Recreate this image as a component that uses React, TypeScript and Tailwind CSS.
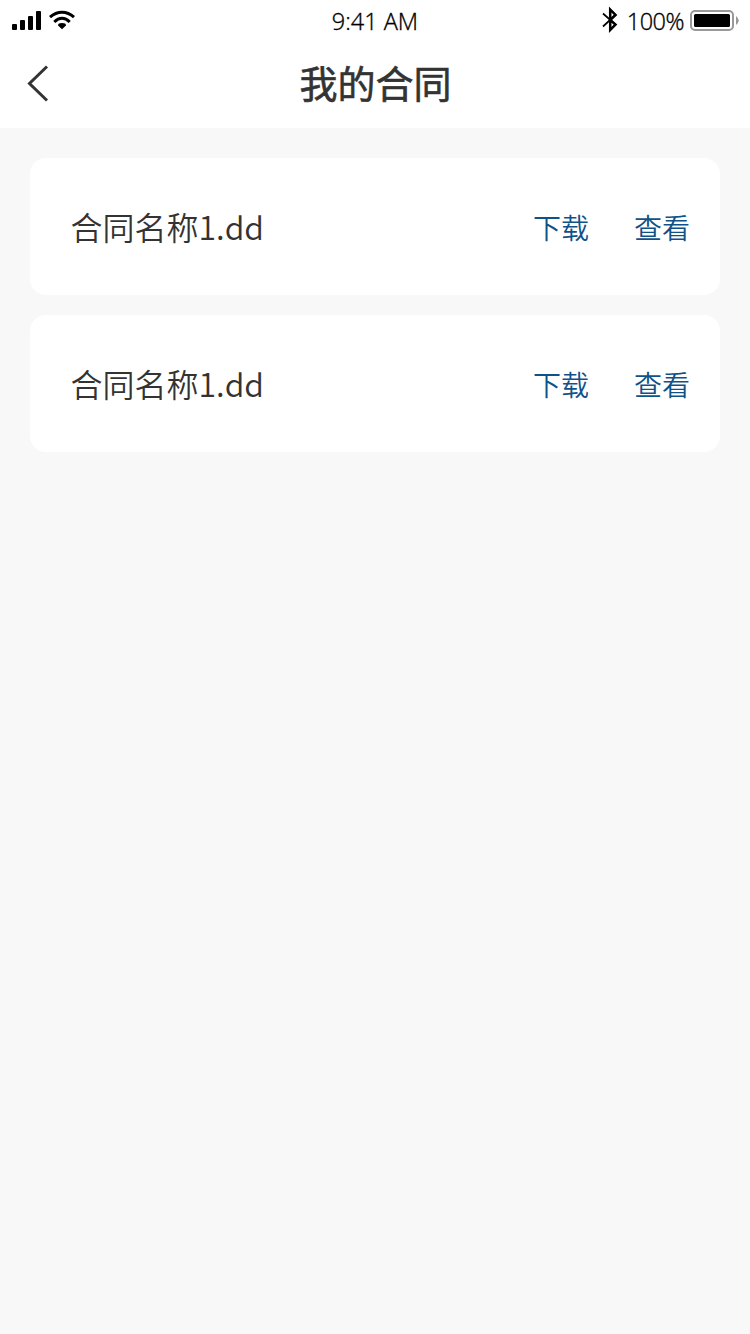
const contracts = [
  { id: 1, name: '合同名称1.dd' },
  { id: 2, name: '合同名称1.dd' },
]

function StatusBar() {
  return (
    <div className="grid h-10 grid-cols-3 items-center bg-white font-['Open_Sans',sans-serif] text-[23.5px] leading-none font-light text-black [-webkit-text-stroke:0.35px_black]">
      <div className="flex items-center gap-2 pl-3">
        <svg width="29" height="20" viewBox="0 0 29 20" fill="currentColor">
          <rect x="0" y="14" width="5" height="6" rx="1" />
          <rect x="8" y="10" width="5" height="10" rx="1" />
          <rect x="16" y="6" width="5" height="14" rx="1" />
          <rect x="24" y="1" width="5" height="19" rx="1" />
        </svg>
        <svg width="26" height="20" viewBox="0 0 26 20" fill="none" stroke="currentColor" strokeWidth="3">
          <path d="M1 7.2Q6.5 2.3 13 2.3T25 7.2" />
          <path d="M5.3 12Q9 8.3 13 8.3T20.7 12" />
          <path d="M9 15.4Q9 13 13 13T17 15.4L13 19.2Z" fill="currentColor" stroke="none" />
        </svg>
      </div>
      <span className="pt-[3px] text-center whitespace-nowrap">9:41 AM</span>
      <div className="flex items-center justify-end pr-[11px]">
        <svg width="16" height="28" viewBox="0 0 16 28" fill="none" stroke="currentColor">
          <path d="M1 7.5L13.5 18.5L8.2 24V3.5L13.5 9L1 20.5" strokeWidth="1.7" />
          <path d="M8.2 3.5L13.5 9L8.2 14L13.5 18.5L8.2 24Z" strokeWidth="2.5" />
        </svg>
        <span className="ml-[9px] pt-[3px] tracking-[-0.5px]">100%</span>
        <svg className="ml-[6px]" width="49" height="22" viewBox="0 0 49 22">
          <rect x="1" y="2" width="42" height="19" rx="4" fill="none" stroke="#999" strokeWidth="2" />
          <rect x="4" y="5" width="36" height="13" rx="1.5" />
          <path d="M46 7Q51.5 11.5 46 16Z" fill="#999" />
        </svg>
      </div>
    </div>
  )
}

export default function App() {
  return (
    <div className="min-h-screen bg-[#f8f8f8] font-['Noto_Sans_CJK_SC',sans-serif] text-[#333]">
      <StatusBar />

      {/* Title bar */}
      <header className="grid h-[88px] grid-cols-[100px_1fr_100px] items-center bg-white">
        <button className="pl-[27px]" aria-label="返回">
          <svg width="22" height="38" viewBox="0 0 22 38" fill="none" stroke="currentColor" strokeWidth="3">
            <path d="M20 1.5L2.5 18.5L20 35.5" />
          </svg>
        </button>
        <h1 className="pb-1 pl-px text-center text-[38px] leading-[56px] font-normal [-webkit-text-stroke:0.6px_#333]">我的合同</h1>
      </header>

      {/* Contract list */}
      <main className="flex flex-col gap-5 px-[30px] pt-[30px]">
        {contracts.map(contract => (
          <div key={contract.id} className="flex h-[137px] items-center rounded-2xl bg-white pr-[30px] pl-[40.5px]">
            <p className="flex-1 pb-0.5 text-[32px] font-[350]">{contract.name}</p>
            <div className="flex gap-[45px] text-[28px] font-[350] text-[#0f5288]">
              <button>下载</button>
              <button>查看</button>
            </div>
          </div>
        ))}
      </main>
    </div>
  )
}
